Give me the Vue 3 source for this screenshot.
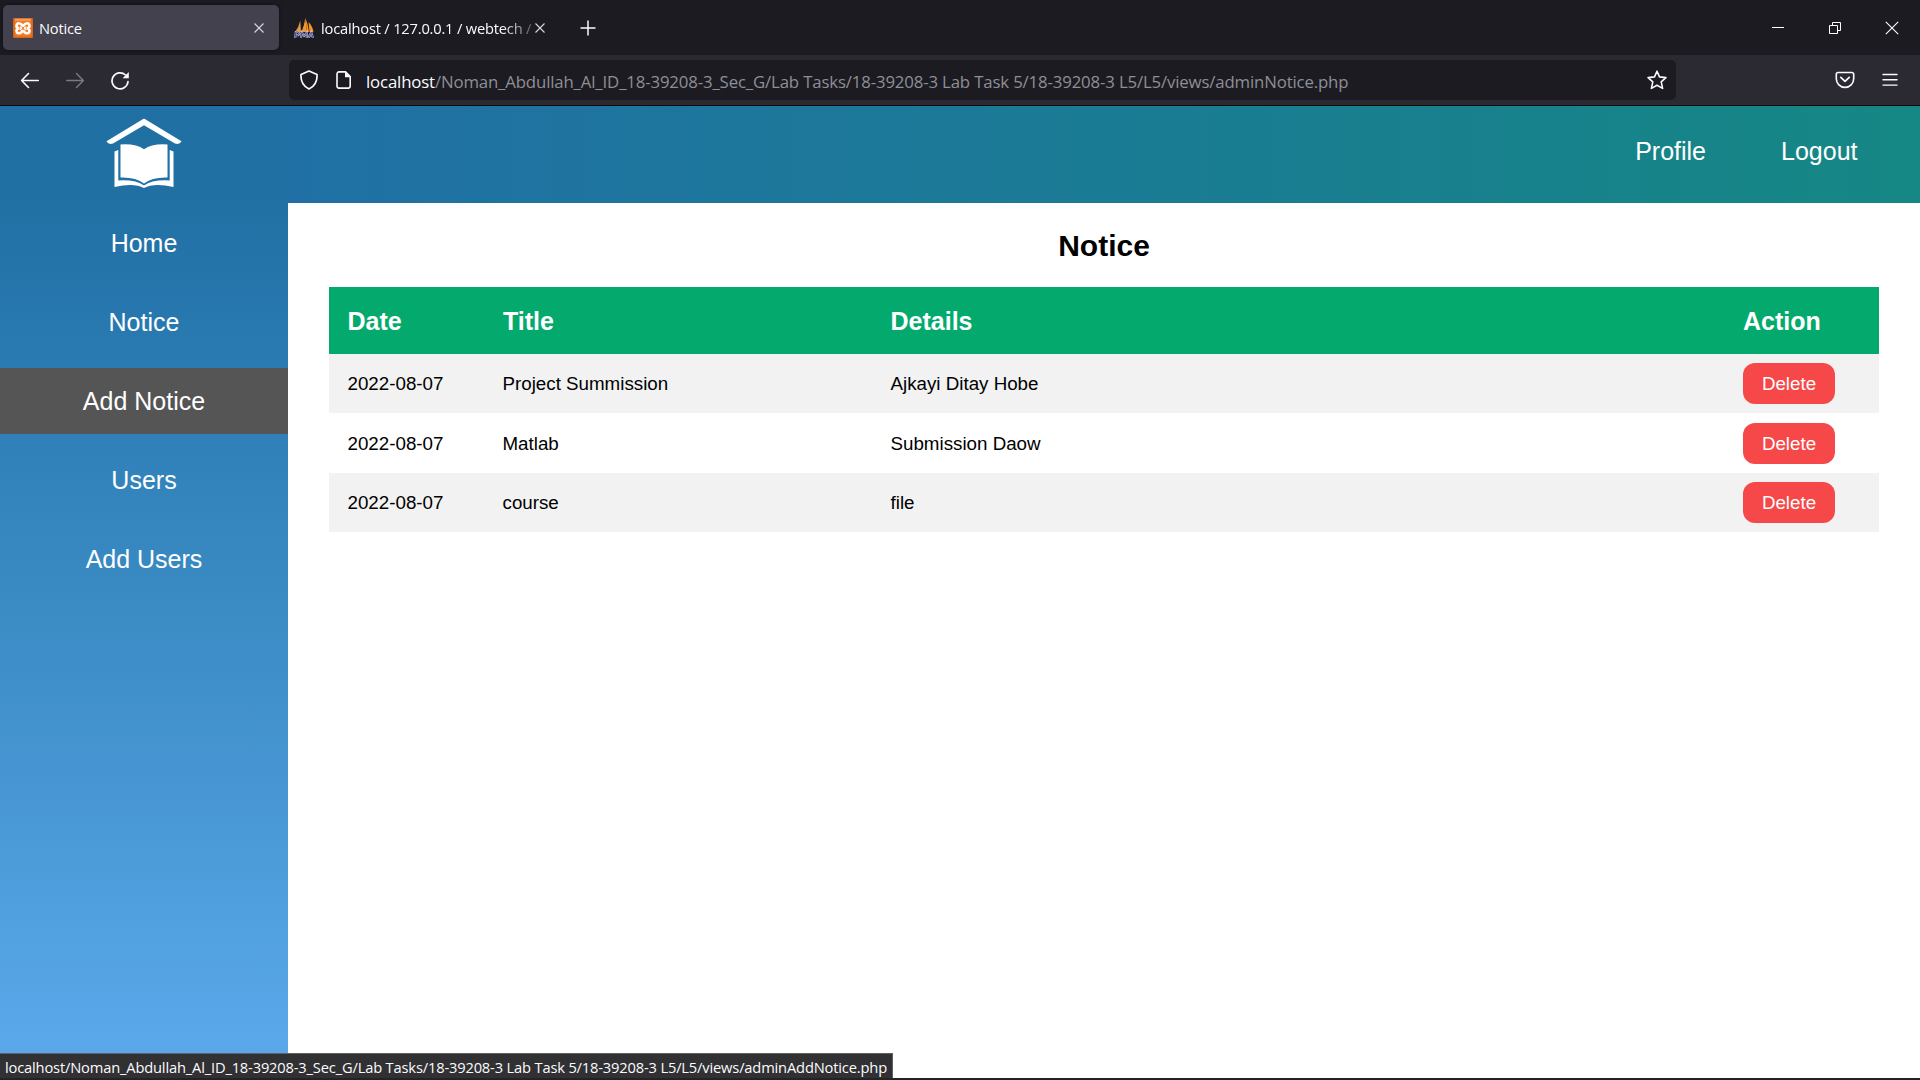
<script setup>
const navItems = ['Home', 'Notice', 'Add Notice', 'Users', 'Add Users']
const activeItem = 'Add Notice'
const notices = [
  { date: '2022-08-07', title: 'Project Summission', details: 'Ajkayi Ditay Hobe' },
  { date: '2022-08-07', title: 'Matlab', details: 'Submission Daow' },
  { date: '2022-08-07', title: 'course', details: 'file' },
]
</script>

<template>
  <div class="window">
    <div class="tabbar">
      <div class="tab active">
        <svg class="fav" viewBox="0 0 20 20" width="20" height="20">
          <rect width="20" height="20" rx="1" fill="#d9641a" />
          <rect x="1.500" y="3" width="17" height="15.500" fill="#f47a20" />
          <rect x="2" y="0.800" width="16" height="2" fill="#f5a06a" />
          <g fill="none" stroke="#fff" stroke-width="2.500" stroke-linejoin="round">
            <path d="M10 8.600Q8.500 5.400 6.300 5.400a2.300 2.300 0 0 0-1.300 4.400q.8.500 0 1a2.300 2.300 0 0 0 1.300 4.400Q8.500 15.200 10 12" />
            <path d="M10 8.600Q11.500 5.400 13.700 5.400a2.300 2.300 0 0 1 1.300 4.400q-.8.500 0 1a2.300 2.300 0 0 1-1.300 4.400Q11.500 15.200 10 12" />
            <path d="M6.800 8.600l1.800 1.700-1.800 1.700M13.200 8.600l-1.800 1.700 1.800 1.700" stroke-width="1.300" />
          </g>
        </svg>
        <span class="tab-text">Notice</span>
        <svg class="close" viewBox="0 0 10 10" width="10" height="10"><path d="M.5.5l9 9M9.500.5l-9 9" stroke="#d8d8dc" stroke-width="1.100" /></svg>
      </div>
      <div class="tab second">
        <svg class="fav" viewBox="0 0 20 20" width="20" height="20">
          <path d="M1 14Q5 9 6.200 2.500L7 14zM7.500 14Q10.500 7 11.300 0L13 14z" fill="#e79a3c" />
          <path d="M11.300 0Q14.500 7 15 14H13zM14.500 4Q18.500 8 19.500 14H15.500z" fill="#f7931e" />
          <path d="M1.200 20l.6-6h2.700q2 1.700-.4 3.300H1.800M7 20l.8-5.500 2.300 3.300 2.700-3.300V20M14.300 20l3-5.800L19 20M15.400 18h3" fill="none" stroke="#c4c4df" stroke-width="2" />
          <path d="M1.200 20l.6-6h2.700q2 1.700-.4 3.300H1.800M7 20l.8-5.500 2.300 3.300 2.700-3.300V20M14.300 20l3-5.800L19 20M15.400 18h3" fill="none" stroke="#4a4a8c" stroke-width="1" />
        </svg>
        <span class="tab-text fade">localhost / 127.0.0.1 / webtech /</span>
        <svg class="close" viewBox="0 0 10 10" width="10" height="10"><path d="M.5.5l9 9M9.500.5l-9 9" stroke="#d8d8dc" stroke-width="1.100" /></svg>
      </div>
      <svg class="plus" viewBox="0 0 16 16" width="16" height="16"><path d="M8 .5v15M.5 8h15" stroke="#fbfbfe" stroke-width="1.500" /></svg>
      <div class="controls">
        <svg viewBox="0 0 14 14" width="14" height="14"><path d="M1 6.500h12" stroke="#fff" /></svg>
        <svg viewBox="0 0 14 14" width="14" height="14"><path d="M1.500 4.500h8v8h-8zM4.500 4.500v-3h8v8h-3" fill="none" stroke="#fff" /></svg>
        <svg viewBox="0 0 14 14" width="14" height="14"><path d="M.8.800l12.400 12.400M13.200.800L.8 13.200" stroke="#fff" stroke-width="1.100" /></svg>
      </div>
    </div>

    <div class="toolbar">
      <div class="nav-buttons">
        <svg viewBox="0 0 20 20" width="20" height="20"><path d="M18.300 10.500H2M8.500 3.500L1.600 10.500l6.900 7" fill="none" stroke="#fbfbfe" stroke-width="1.600" stroke-linecap="round" stroke-linejoin="round" /></svg>
        <svg viewBox="0 0 20 20" width="20" height="20"><path d="M1.700 10.500H18M11.500 3.500l6.900 7-6.900 7" fill="none" stroke="#7b7a83" stroke-width="1.400" stroke-linecap="round" stroke-linejoin="round" /></svg>
        <svg viewBox="0 0 20 20" width="20" height="20"><path d="M18 11.500A8 8 0 1 1 15.500 5" fill="none" stroke="#fbfbfe" stroke-width="1.700" stroke-linecap="round" /><path d="M18.800 2v6.200h-6.200z" fill="#fbfbfe" /></svg>
      </div>
      <div class="urlbar">
        <svg class="shield" viewBox="0 0 20 20" width="20" height="20"><path d="M10 1L18 4.500c.4 5.800-1.700 11.500-8 14.600C3.700 16 1.600 10.300 2 4.500z" fill="none" stroke="#fbfbfe" stroke-width="1.700" stroke-linejoin="round" /></svg>
        <svg class="doc" viewBox="0 0 16 20" width="16" height="20"><path d="M3 1.900h6.500l4.700 4.700v9.500a2 2 0 0 1-2 2H3a2 2 0 0 1-2-2V3.900a2 2 0 0 1 2-2z" fill="none" stroke="#fbfbfe" stroke-width="1.600" /><path d="M9 1.500v5.700h5.700z" fill="#fbfbfe" /></svg>
        <span class="url"><b>localhost</b>/Noman_Abdullah_Al_ID_18-39208-3_Sec_G/Lab Tasks/18-39208-3 Lab Task 5/18-39208-3 L5/L5/views/adminNotice.php</span>
        <svg class="star" viewBox="0 0 20 20" width="20" height="20"><path d="M10 1.200l2.500 5.700 6.400.700-4.700 4.300 1.400 6.500L10 15.200l-5.600 3.200 1.400-6.500L1.100 7.600l6.400-.700z" fill="none" stroke="#fbfbfe" stroke-width="1.600" stroke-linejoin="round" /></svg>
      </div>
      <div class="tools">
        <svg viewBox="0 0 20 20" width="20" height="20"><path d="M3 2.500h14a1.700 1.700 0 0 1 1.700 1.700v4.500a8.700 8.700 0 0 1-17.400 0V4.200A1.700 1.700 0 0 1 3 2.500z" fill="none" stroke="#fbfbfe" stroke-width="1.600" /><path d="M5.800 7.400L10 11.400l4.200-4" fill="none" stroke="#fbfbfe" stroke-width="1.700" stroke-linecap="round" stroke-linejoin="round" /></svg>
        <svg viewBox="0 0 16 14" width="16" height="14"><path d="M1 1.500h14M1 6.800h14M1 12.100h14" stroke="#fbfbfe" stroke-width="1.400" stroke-linecap="round" /></svg>
      </div>
    </div>

    <div class="page">
      <aside class="sidebar">
        <svg class="logo" viewBox="0 0 76 72" width="76" height="72">
          <path d="M38 .5L.5 23.300Q2.500 27 7 25.500L38 7.200 69 25.500Q73.500 27 75.500 23.300z" fill="#fff" />
          <path d="M14.500 26.500Q30 25.500 38 31.200 46 25.500 61.500 26.500V59.500Q46 59 38 65.500 30 59 14.500 59.500z" fill="#fff" />
          <path d="M12.300 32L8.500 33.500V69Q28 64.500 38 70 48 64.500 67.500 69V33.500L63.700 32V62.500Q46 61.500 38 67.600 30 61.500 12.300 62.500z" fill="#fff" />
        </svg>
        <nav>
          <a v-for="item in navItems" :key="item" :class="{ active: item === activeItem }">{{ item }}</a>
        </nav>
      </aside>
      <div class="main">
        <header class="header">
          <a>Profile</a>
          <a>Logout</a>
        </header>
        <h2>Notice</h2>
        <div class="table">
          <div class="row head"><span>Date</span><span>Title</span><span>Details</span><span>Action</span></div>
          <div v-for="n in notices" :key="n.title" class="row">
            <span>{{ n.date }}</span><span>{{ n.title }}</span><span>{{ n.details }}</span><span><button>Delete</button></span>
          </div>
        </div>
      </div>
      <div class="status">localhost/Noman_Abdullah_Al_ID_18-39208-3_Sec_G/Lab Tasks/18-39208-3 Lab Task 5/18-39208-3 L5/L5/views/adminAddNotice.php</div>
    </div>
    <div class="edge"></div>
  </div>
</template>

<style>
body { margin: 0; overflow: hidden; }
</style>

<style scoped>
.window { width: 1920px; height: 1080px; display: flex; flex-direction: column; background: #fff; font-family: "Liberation Sans", Arial, sans-serif; overflow: hidden; }
svg { display: block; flex: none; }
.tabbar { height: 55px; flex: none; background: #1c1b22; display: flex; align-items: center; font-family: "Open Sans", "Noto Sans", sans-serif; }
.tab { display: flex; align-items: center; height: 45px; box-sizing: border-box; color: #fbfbfe; }
.tab.active { margin-left: 3px; width: 276px; padding: 0 15px 0 10px; background: #42414d; border-radius: 5px; box-shadow: 0 0 4px rgba(0, 0, 0, .5); }
.tab.second { margin-left: 3px; width: 276px; padding: 0 13px 0 12px; }
.tab-text { margin-left: 6px; padding-top: 1px; font-size: 14.700px; white-space: nowrap; flex: 1; letter-spacing: -.2px; }
.fade { margin-left: 7px; -webkit-mask-image: linear-gradient(90deg, #000 84%, rgba(0, 0, 0, .2)); mask-image: linear-gradient(90deg, #000 84%, rgba(0, 0, 0, .2)); }
.plus { margin-left: 21.500px; }
.controls { margin-left: auto; margin-right: 21px; display: flex; gap: 43px; }
.toolbar { height: 51px; flex: none; box-sizing: border-box; border-bottom: 1px solid #0c0c0d; background: #2b2a33; display: flex; align-items: center; }
.nav-buttons { width: 289px; box-sizing: border-box; padding-left: 20px; display: flex; gap: 25px; }
.urlbar { width: 1387px; height: 40px; border-radius: 5px; background: #1c1b22; display: flex; align-items: center; box-sizing: border-box; padding: 0 9px 0 10px; }
.doc { margin-left: 17px; }
.url { flex: 1; margin-left: 14px; padding-top: 3px; font: 16.800px "Open Sans", "Noto Sans", sans-serif; letter-spacing: -.15px; color: #8f8f96; white-space: nowrap; }
.url b { font-weight: 400; color: #fbfbfe; }
.tools { margin-left: auto; margin-right: 22px; display: flex; align-items: center; gap: 27px; }
.page { flex: 1; position: relative; display: flex; min-height: 0; }
.sidebar { width: 288px; flex: none; background: linear-gradient(#2070a3 0, #2070a3 9%, #2878b0 22%, #3b8bc5 52%, #5caaec 100%); }
.logo { margin: 12px auto 0; }
nav { display: flex; flex-direction: column; gap: 13px; margin-top: 20px; }
nav a { height: 66px; line-height: 66px; text-align: center; font-size: 25px; color: #fff; }
nav a.active { background: #555; }
.main { flex: 1; }
.header { height: 97px; box-sizing: border-box; padding: 0 62.500px 6px 0; display: flex; justify-content: flex-end; align-items: center; gap: 75px; background: linear-gradient(90deg, #2070a5, #158784); font-size: 25px; color: #fff; }
h2 { margin: 25px 0 24px; line-height: 35px; text-align: center; font-size: 30px; color: #000; }
.table { margin: 0 41px; }
.row { height: 59px; display: grid; grid-template-columns: 155px 388px 853px 154px; align-items: center; font-size: 18.750px; color: #000; }
.row span { padding-left: 18.500px; }
.row span:last-child { padding-left: 18px; }
.row:nth-child(even) { background: #f2f2f2; }
.row:nth-child(3) { height: 60px; }
.row:nth-child(3) span { padding-top: 1px; }
.row.head { height: 67px; background: #04aa6d; color: #fff; font-size: 25px; font-weight: 700; }
.row.head span { padding-top: 2px; }
.row.head span:nth-child(2) { padding-left: 19px; }
button { display: block; width: 92px; height: 41px; padding: 0; border: 0; border-radius: 12px; background: #f64848; color: #fff; font: 18.750px "Liberation Sans", Arial, sans-serif; }
.status { position: absolute; left: 0; bottom: 0; height: 25px; width: 893px; box-sizing: border-box; padding-left: 5px; border-top: 1px solid #5f5f64; border-right: 1px solid #5f5f64; background: #313134; color: #fbfbfe; font: 14.700px/27px "Open Sans", "Noto Sans", sans-serif; letter-spacing: -.17px; white-space: nowrap; }
.edge { height: 2px; flex: none; background: #232225; }
</style>
